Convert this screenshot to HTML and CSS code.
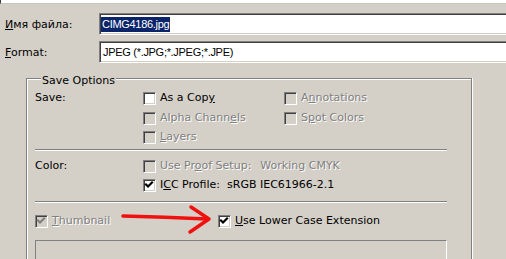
FILE: index.html
```html
<!DOCTYPE html>
<html>
<head>
<meta charset="utf-8">
<link rel="stylesheet" href="styles.css">
</head>
<body>
<div class="topbox"></div>
<div class="fields">
  <div class="frow">
    <label class="flabel"><u>И</u>мя файла:</label>
    <div class="field"><span class="sel">CIMG4186.jpg</span></div>
  </div>
  <div class="frow">
    <label class="flabel"><u>F</u>ormat:</label>
    <div class="field"><span class="ftext">JPEG (*.JPG;*.JPEG;*.JPE)</span></div>
  </div>
</div>

<fieldset class="group">
  <legend class="legend">Save Options</legend>

  <div class="sect sect-save">
    <div class="slabel">Save:</div>
    <div class="opts">
      <div class="opt"><span class="cb"></span><span class="txt">As a Cop<u>y</u></span></div>
      <div class="opt dis"><span class="cb"></span><span class="txt">Alpha Chann<u>e</u>ls</span></div>
      <div class="opt dis"><span class="cb"></span><span class="txt"><u>L</u>ayers</span></div>
    </div>
    <div class="opts">
      <div class="opt dis"><span class="cb"></span><span class="txt">A<u>n</u>notations</span></div>
      <div class="opt dis"><span class="cb"></span><span class="txt">S<u>p</u>ot Colors</span></div>
    </div>
  </div>

  <div class="sep"></div>

  <div class="sect sect-color">
    <div class="slabel">Color:</div>
    <div class="opts">
      <div class="opt dis"><span class="cb"></span><span class="txt">Use Pr<u>o</u>of Setup:</span><span class="txt extra">Working CMYK</span></div>
      <div class="opt"><span class="cb on"><svg viewBox="0 0 13 13" width="13" height="13"><path d="M3 5.5 L5 7.5 L9 3.5" /></svg></span><span class="txt">I<u>C</u>C Profile:</span><span class="txt extra2">sRGB IEC61966-2.1</span></div>
    </div>
  </div>

  <div class="sep sep2"></div>

  <div class="sect sect-thumb">
    <div class="opt dis"><span class="cb on"><svg viewBox="0 0 13 13" width="13" height="13"><path d="M3 5.5 L5 7.5 L9 3.5" /></svg></span><span class="txt"><u>T</u>humbnail</span></div>
    <div class="opt"><span class="cb on"><svg viewBox="0 0 13 13" width="13" height="13"><path d="M3 5.5 L5 7.5 L9 3.5" /></svg></span><span class="txt"><u>U</u>se Lower Case Extension</span></div>
  </div>

  <div class="preview"></div>
</fieldset>

<svg class="arrow" width="506" height="259" viewBox="0 0 506 259">
  <path d="M123 216 Q 165 217 207 219" />
  <path d="M191 207 L209 219 L190 232" />
</svg>
</body>
</html>
```
FILE: styles.css
```css
html, body {
  margin: 0;
  padding: 0;
}
body {
  width: 506px;
  height: 259px;
  overflow: hidden;
  position: relative;
  background: #d4d0c8;
  font-family: "DejaVu Sans", Verdana, sans-serif;
  font-size: 11px;
  line-height: 13px;
  color: #000;
}
.topbox {
  height: 3px;
  background: #fff;
  border-left: 1px solid #404040;
  border-bottom: 1px solid #c8c5bd;
}
.fields {
  padding-top: 9px;
}
.frow {
  display: flex;
  align-items: center;
  height: 22px;
  margin-bottom: 6px;
}
.flabel {
  width: 94px;
  padding-left: 5px;
  flex: none;
}
.field {
  box-sizing: border-box;
  flex: 1;
  min-width: 0;
  height: 22px;
  background: #fff;
  border: 1px solid;
  border-right: 0;
  border-color: #808080 #fff #fff #808080;
  box-shadow: inset 1px 1px 0 #404040, inset 0 -1px 0 #d4d0c8;
  padding: 0 1px;
  display: flex;
  align-items: center;
  font-family: "Liberation Sans", Arial, sans-serif;
  font-size: 11px;
  letter-spacing: -0.3px;
}
.sel {
  background: #0a246a;
  color: #fff;
  line-height: 15px;
  padding: 0 1px;
  margin-top: 1px;
}
.ftext {
  padding-left: 2px;
  margin-top: 1px;
}
.group {
  box-sizing: border-box;
  margin: 7px 0 0 26px;
  width: 446px;
  height: 189px;
  padding: 0 24px 0 8px;
  min-width: 0;
  border: 1px solid #808080;
  border-bottom: 0;
  box-shadow: inset 1px 1px 0 #fff, 1px 0 0 #fff;
}
.legend {
  padding: 4px 1px 0;
  margin-left: 6px;
  background: #d4d0c8;
  line-height: 13px;
}
.sect {
  display: grid;
}
.sect-save {
  grid-template-columns: 108px 141px 1fr;
  padding-top: 4px;
}
.sect-color {
  grid-template-columns: 108px 1fr;
  padding-top: 8px;
}
.sect-thumb {
  grid-template-columns: 183px 1fr;
  padding-top: 11px;
}
.opts {
  display: flex;
  flex-direction: column;
}
.sect-save .opt:first-child {
  height: 20px;
}
.opt {
  display: flex;
  align-items: flex-start;
  height: 19px;
}
.cb {
  box-sizing: border-box;
  width: 13px;
  height: 13px;
  flex: none;
  margin-top: 1px;
  margin-right: 4px;
  background: #fff;
  border: 1px solid;
  border-color: #808080 #fff #fff #808080;
  box-shadow: inset 1px 1px 0 #404040, inset -1px -1px 0 #d4d0c8;
  position: relative;
}
.cb svg {
  position: absolute;
  left: -1px;
  top: -1px;
}
.cb svg path {
  fill: none;
  stroke: #000;
  stroke-width: 2.2;
  stroke-linecap: square;
}
.dis .cb {
  background: #d4d0c8;
}
.dis .cb svg path {
  stroke: #808080;
}
.dis .txt {
  color: #808080;
  text-shadow: 1px 1px 0 #fff;
}
.extra {
  margin-left: 9px;
}
.extra2 {
  margin-left: 7px;
}
.sep {
  height: 0;
  border-top: 1px solid #808080;
  border-bottom: 1px solid #fff;
}
.sep2 {
  margin-top: 4px;
}
.preview {
  box-sizing: border-box;
  margin-top: 7px;
  height: 19px;
  border: 1px solid;
  border-bottom: 0;
  border-color: #808080 #fff #fff #808080;
}
.arrow {
  position: absolute;
  left: 0;
  top: 0;
  pointer-events: none;
}
.arrow path {
  fill: none;
  stroke: #f01010;
  stroke-width: 3.5;
  stroke-linecap: round;
  stroke-linejoin: round;
}
```
